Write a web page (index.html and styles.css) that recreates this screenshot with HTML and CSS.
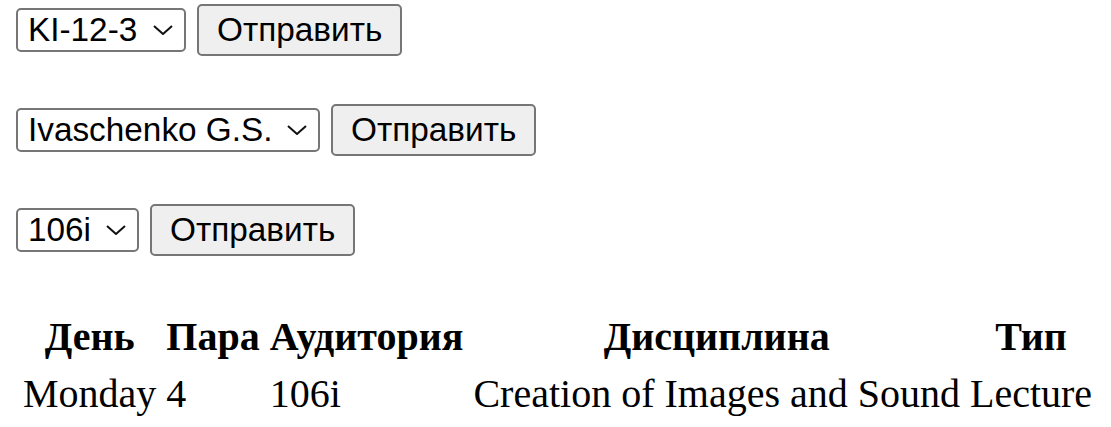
FILE: index.html
```html
<!DOCTYPE html>
<html lang="ru">
<head>
<meta charset="utf-8">
<title>Расписание</title>
<link rel="stylesheet" href="styles.css">
</head>
<body>
<div class="forms">
  <form class="picker">
    <span class="select-wrap">
      <select class="select select-group" name="group"><option>KI-12-3</option></select>
      <svg class="chevron" viewBox="0 0 20 10" width="20" height="10"><path d="M1 1 L10 9 L19 1" fill="none" stroke="#111" stroke-width="2"/></svg>
    </span>
    <button class="btn" type="submit">Отправить</button>
  </form>
  <form class="picker">
    <span class="select-wrap">
      <select class="select select-teacher" name="teacher"><option>Ivaschenko G.S.</option></select>
      <svg class="chevron" viewBox="0 0 20 10" width="20" height="10"><path d="M1 1 L10 9 L19 1" fill="none" stroke="#111" stroke-width="2"/></svg>
    </span>
    <button class="btn" type="submit">Отправить</button>
  </form>
  <form class="picker">
    <span class="select-wrap">
      <select class="select select-room" name="room"><option>106i</option></select>
      <svg class="chevron" viewBox="0 0 20 10" width="20" height="10"><path d="M1 1 L10 9 L19 1" fill="none" stroke="#111" stroke-width="2"/></svg>
    </span>
    <button class="btn" type="submit">Отправить</button>
  </form>
</div>
<table class="schedule">
  <thead>
    <tr><th>День</th><th>Пара</th><th>Аудитория</th><th>Дисциплина</th><th>Тип</th></tr>
  </thead>
  <tbody>
    <tr><td>Monday</td><td>4</td><td>106i</td><td>Creation of Images and Sound</td><td>Lecture</td></tr>
  </tbody>
</table>
</body>
</html>
```
FILE: styles.css
```css
html, body {
  background: #fff;
}
body {
  margin: 4px 8px 0 16px;
  font-family: "Liberation Serif", "Times New Roman", serif;
  color: #000;
}
.forms {
  display: flex;
  flex-direction: column;
  gap: 48px;
}
.picker {
  display: flex;
  align-items: center;
  gap: 11px;
  margin: 0;
}
.select-wrap {
  position: relative;
  display: inline-flex;
}
.select {
  appearance: none;
  -webkit-appearance: none;
  box-sizing: border-box;
  height: 44px;
  margin: 0;
  padding: 2px 40px 2px 10px;
  font-family: "Liberation Sans", Arial, sans-serif;
  font-size: 33.33px;
  line-height: 36px;
  color: #000;
  background: #fff;
  border: 2px solid #767676;
  border-radius: 5px;
}
.select-group { width: 170px; }
.select-teacher { width: 304px; }
.select-room { width: 123px; }
.chevron {
  position: absolute;
  right: 13px;
  top: 17px;
  pointer-events: none;
}
.btn {
  box-sizing: border-box;
  height: 52px;
  margin: 0;
  padding: 6px 18px;
  font-family: "Liberation Sans", Arial, sans-serif;
  font-size: 33.33px;
  line-height: 36px;
  color: #000;
  background: #efefef;
  border: 2px solid #767676;
  border-radius: 5px;
}
.schedule {
  margin-top: 50px;
  border-collapse: separate;
  border-spacing: 4px;
  font-size: 40px;
}
.schedule th,
.schedule td {
  padding: 3px;
  white-space: nowrap;
}
.schedule th {
  font-weight: bold;
  text-align: center;
}
.schedule td {
  text-align: left;
}
```
